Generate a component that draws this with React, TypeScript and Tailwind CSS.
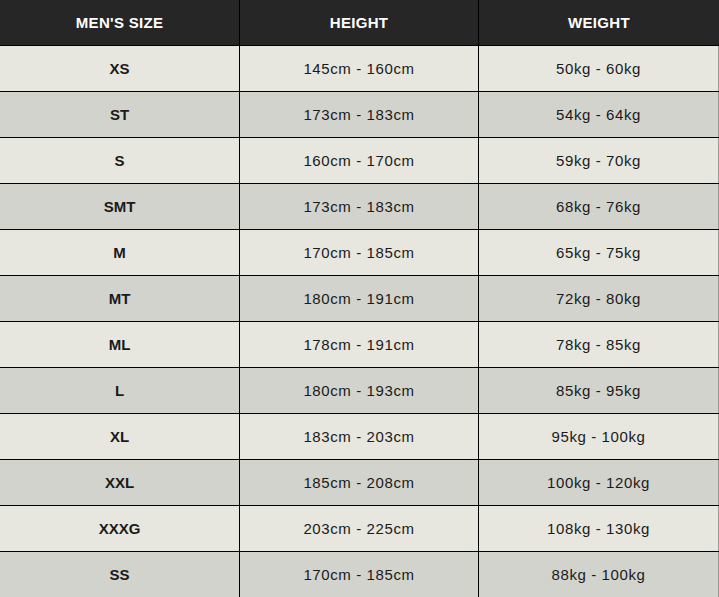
import React from "react";

const rows: [string, string, string][] = [
  ["XS", "145cm - 160cm", "50kg - 60kg"],
  ["ST", "173cm - 183cm", "54kg - 64kg"],
  ["S", "160cm - 170cm", "59kg - 70kg"],
  ["SMT", "173cm - 183cm", "68kg - 76kg"],
  ["M", "170cm - 185cm", "65kg - 75kg"],
  ["MT", "180cm - 191cm", "72kg - 80kg"],
  ["ML", "178cm - 191cm", "78kg - 85kg"],
  ["L", "180cm - 193cm", "85kg - 95kg"],
  ["XL", "183cm - 203cm", "95kg - 100kg"],
  ["XXL", "185cm - 208cm", "100kg - 120kg"],
  ["XXXG", "203cm - 225cm", "108kg - 130kg"],
  ["SS", "170cm - 185cm", "88kg - 100kg"],
];

export default function App() {
  return (
    <div className="w-[719px] h-[597px] overflow-hidden font-['Liberation_Sans',Arial,sans-serif] text-[#1a1a1a]">
      <div className="grid grid-cols-[240px_239px_1fr] h-[46px] bg-[#262626] text-white font-bold text-[15px] tracking-[0.3px] border-b border-black">
        <div className="flex items-center justify-center pt-[2px] border-r border-black">MEN'S SIZE</div>
        <div className="flex items-center justify-center pt-[2px] border-r border-black">HEIGHT</div>
        <div className="flex items-center justify-center pt-[2px]">WEIGHT</div>
      </div>
      {rows.map((r, i) => (
        <div
          key={i}
          className={`grid grid-cols-[240px_239px_1fr] h-[46px] border-b border-black ${i % 2 === 0 ? "bg-[#e7e7e0]" : "bg-[#d3d3ce]"}`}
        >
          <div className="flex items-center justify-center pt-[2px] border-r border-black font-bold text-[15px]">{r[0]}</div>
          <div className="flex items-center justify-center pt-[2px] border-r border-black text-[15px] tracking-[0.6px]">{r[1]}</div>
          <div className="flex items-center justify-center pt-[2px] border-r border-[#9a9a96] text-[15px] tracking-[0.6px]">{r[2]}</div>
        </div>
      ))}
    </div>
  );
}
